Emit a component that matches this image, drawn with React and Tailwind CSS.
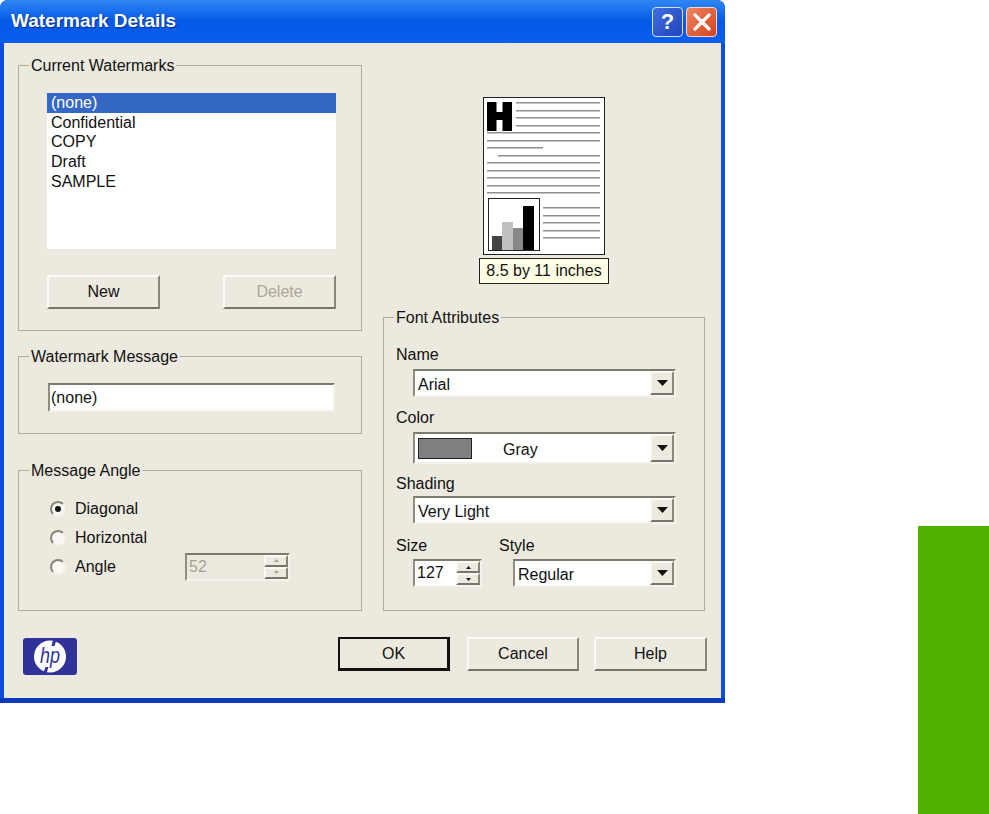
import React from 'react';

const raised = 'border-2 border-t-[#fbfaf6] border-l-[#fbfaf6] border-r-[#8a8678] border-b-[#77746a]';
const sunken = 'border-2 border-t-[#7d7a6e] border-l-[#8f8c80] border-r-[#f4f2ea] border-b-[#f4f2ea]';

function Group({ title, className, inner, children }) {
  return (
    <fieldset className={`border border-[#aeab9b] min-w-0 ${className}`}>
      <legend className="ml-[10px] px-[2px] h-[18px] leading-[20px] text-[16px]">{title}</legend>
      <div className={inner}>{children}</div>
    </fieldset>
  );
}

function Btn({ label, disabled, className }) {
  return (
    <button className={`${raised} flex items-center justify-center bg-[#ece9df] text-[16px] h-[34px] ${disabled ? 'text-[#aca899]' : 'text-[#111]'} ${className}`}>
      {label}
    </button>
  );
}

function Arrow() {
  return (
    <svg width="11" height="6" viewBox="0 0 11 6"><path d="M0 0h11L5.500 6z" fill="#111" /></svg>
  );
}

function Combo({ className, children }) {
  return (
    <div className={`${sunken} flex items-stretch bg-white ${className}`}>
      <div className="flex-1 flex items-center pl-[3px] pt-[4px] text-[16px] min-w-0">{children}</div>
      <div className={`${raised} w-[24px] bg-[#ece9df] flex items-center justify-center`}>
        <Arrow />
      </div>
    </div>
  );
}

function Spin({ value, disabled, className }) {
  const color = disabled ? '#a5a294' : '#111';
  return (
    <div className={`${sunken} flex items-stretch ${disabled ? 'bg-[#ece9df]' : 'bg-white'} ${className}`}>
      <div className={`flex-1 flex items-center pl-[2px] text-[16px] ${disabled ? 'text-[#a5a294]' : 'text-[#111]'}`}>{value}</div>
      <div className="w-[24px] flex flex-col">
        <div className={`${raised} flex-1 bg-[#ece9df] flex items-center justify-center`}>
          <svg width="5" height="3" viewBox="0 0 5 3"><path d="M0 3h5L2.500 0z" fill={color} /></svg>
        </div>
        <div className={`${raised} flex-1 bg-[#ece9df] flex items-center justify-center`}>
          <svg width="5" height="3" viewBox="0 0 5 3"><path d="M0 0h5L2.500 3z" fill={color} /></svg>
        </div>
      </div>
    </div>
  );
}

function Radio({ label, checked, children }) {
  return (
    <div className="flex items-center h-[29px] text-[16px]">
      <div className="ml-[1px] w-[16px] h-[16px] rounded-full bg-[#f8f7f1] border-2 border-[#f4f2ea] border-t-[#8a877a] border-l-[#8a877a] flex items-center justify-center">
        {checked && <div className="w-[6px] h-[6px] rounded-full bg-[#111]" />}
      </div>
      <span className="ml-[9px] w-[110px]">{label}</span>
      {children}
    </div>
  );
}

function PagePreview() {
  const topLines = [5, 13, 20, 28];
  const fullLines = [35, 43, 65, 73, 80, 88, 95];
  const sideLines = [110, 118, 125, 133, 140];
  return (
    <svg width="122" height="158" viewBox="0 0 122 158" className="block">
      <rect x="0.500" y="0.500" width="121" height="157" fill="#fff" stroke="#222" />
      <path d="M4 5h9.500v10h6V5H29v29h-9.500V23h-6v11H4z" fill="#000" />
      {topLines.map(y => <rect key={y} x="33" y={y} width="84" height="1.500" fill="#909090" />)}
      {fullLines.map(y => <rect key={y} x="4" y={y} width="113" height="1.500" fill="#909090" />)}
      <rect x="4" y="50" width="56" height="1.500" fill="#909090" />
      <rect x="15" y="58" width="102" height="1.500" fill="#909090" />
      <rect x="5.500" y="101.500" width="51" height="52" fill="#fff" stroke="#222" />
      <rect x="9" y="139" width="10" height="14" fill="#444" />
      <rect x="19" y="125" width="11" height="28" fill="#c0c0c0" />
      <rect x="30" y="131" width="10" height="22" fill="#888" />
      <rect x="40" y="109" width="11" height="44" fill="#000" />
      {sideLines.map(y => <rect key={y} x="60" y={y} width="57" height="1.500" fill="#909090" />)}
    </svg>
  );
}

function HpLogo() {
  return (
    <svg width="54" height="37" viewBox="0 0 54 37" className="block">
      <rect width="54" height="37" rx="3" fill="#2f3399" />
      <circle cx="27" cy="18.500" r="16" fill="#fff" />
      <path d="M30.500 0h3.500l-2.500 8h-3zM22.500 29h3l-2.500 8h-3.500z" fill="#2f3399" />
      <text x="27" y="25" textAnchor="middle" fontFamily="'Liberation Sans', sans-serif" fontStyle="italic" fontSize="22" textLength="20" lengthAdjust="spacingAndGlyphs" fill="#2f3399">hp</text>
    </svg>
  );
}

export default function App() {
  return (
    <div className="w-[989px] h-[814px] bg-white flex justify-between overflow-hidden text-[#111] font-['Liberation_Sans',Arial,sans-serif]">
      <div className="w-[725px] h-[703px] flex flex-col rounded-t-[8px] overflow-hidden bg-[#0b4fdc]">
        {/* Title bar */}
        <div className="h-[43px] shrink-0 flex items-center pl-[11px] pr-[8px] bg-gradient-to-b from-[#2f86f2] via-[#0458e6] to-[#0a5fee]">
          <span className="flex-1 text-white font-bold text-[19px] [text-shadow:1px_1px_1px_#0b2c8f]">Watermark Details</span>
          <div className="w-[31px] h-[30px] rounded-[4px] border border-[#cfe0fb] bg-gradient-to-br from-[#3f6fe0] to-[#2244b8] flex items-center justify-center text-white font-bold text-[22px]">?</div>
          <div className="w-[31px] h-[30px] ml-[3px] rounded-[4px] border border-[#f3d8cc] bg-gradient-to-br from-[#ee8560] to-[#d2401c] flex items-center justify-center">
            <svg width="18" height="18" viewBox="0 0 18 18"><path d="M2 2l14 14M16 2L2 16" stroke="#fff" strokeWidth="3.200" strokeLinecap="round" /></svg>
          </div>
        </div>

        {/* Dialog body */}
        <div className="h-[655px] shrink-0 mx-[4px] bg-[#ece9df] pt-[13px] pl-[14px] flex flex-col">
          <div className="flex gap-[21px]">
            <div className="w-[344px] flex flex-col">
              <Group title="Current Watermarks" className="h-[275px]" inner="pl-[28px] pr-[25px]">
                <div className="mt-[19px] h-[156px] bg-white text-[16px] leading-[19.500px]">
                  <div className="bg-[#3567c4] text-white pl-[4px]">(none)</div>
                  <div className="pl-[4px]">Confidential</div>
                  <div className="pl-[4px]">COPY</div>
                  <div className="pl-[4px]">Draft</div>
                  <div className="pl-[4px] pt-[1px]">SAMPLE</div>
                </div>
                <div className="mt-[26px] flex justify-between">
                  <Btn label="New" className="w-[113px]" />
                  <Btn label="Delete" disabled className="w-[113px]" />
                </div>
              </Group>

              <Group title="Watermark Message" className="h-[87px] mt-[16px]" inner="pl-[29px] pr-[26px]">
                <div className={`${sunken} mt-[18px] h-[29px] bg-white flex items-center pl-[1px] text-[16px]`}>(none)</div>
              </Group>

              <Group title="Message Angle" className="h-[150px] mt-[27px]" inner="pl-[30px]">
                <div className="mt-[15px]">
                  <Radio label="Diagonal" checked />
                  <Radio label="Horizontal" />
                  <Radio label="Angle">
                    <Spin value="52" disabled className="w-[105px] h-[28px]" />
                  </Radio>
                </div>
              </Group>
            </div>

            <div className="w-[322px] flex flex-col items-center">
              <div className="mt-[41px]"><PagePreview /></div>
              <div className="mt-[3px] w-[130px] h-[26px] border border-[#222] bg-[#ffffe6] flex items-center justify-center text-[16px]">8.5 by 11 inches</div>

              <Group title="Font Attributes" className="w-full h-[303px] mt-[24px]" inner="pl-[29px] pr-[28px]">
                <div className="text-[16px] leading-[20px]">
                  <div className="mt-[19px] -ml-[17px]">Name</div>
                  <Combo className="mt-[4px] h-[28px]">Arial</Combo>
                  <div className="mt-[11px] -ml-[17px]">Color</div>
                  <Combo className="mt-[4px] h-[32px]">
                    <div className="w-[54px] h-[21px] -mt-[4px] border border-[#222] bg-[#808080]" />
                    <span className="ml-[31px]">Gray</span>
                  </Combo>
                  <div className="mt-[10px] -ml-[17px]">Shading</div>
                  <Combo className="mt-[2px] h-[28px]">Very Light</Combo>
                  <div className="mt-[12px] flex">
                    <div className="w-[100px]">
                      <div className="-ml-[17px]">Size</div>
                      <Spin value="127" className="mt-[3px] w-[69px] h-[28px]" />
                    </div>
                    <div className="flex-1">
                      <div className="-ml-[14px]">Style</div>
                      <Combo className="mt-[3px] h-[28px]">Regular</Combo>
                    </div>
                  </div>
                </div>
              </Group>
            </div>
          </div>

          {/* Footer */}
          <div className="mt-[26px] flex items-start">
            <div className="ml-[5px] mt-[1px] w-[315px]"><HpLogo /></div>
            <button className="w-[112px] h-[34px] border-2 border-[#111] border-r-[3px] border-b-[3px] bg-[#ece9df] text-[16px]">OK</button>
            <Btn label="Cancel" className="ml-[17px] w-[112px]" />
            <Btn label="Help" className="ml-[15px] w-[113px]" />
          </div>
        </div>

        {/* Bottom window edge */}
        <div className="flex-1 bg-[#0c3ab8]" />
      </div>

      {/* Green side tab */}
      <div className="w-[71px] h-[288px] self-end bg-[#4fb000]" />
    </div>
  );
}
